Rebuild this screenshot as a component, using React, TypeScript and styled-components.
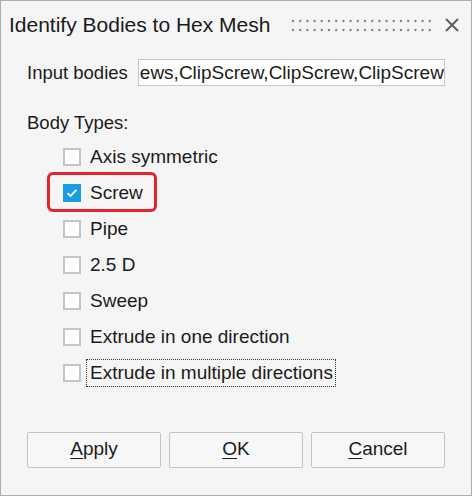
import styled, { createGlobalStyle } from "styled-components";

const GlobalStyle = createGlobalStyle`
  html, body {
    margin: 0;
    padding: 0;
    background: #f5f5f5;
  }
  body {
    font-family: "Liberation Sans", Arial, sans-serif;
  }
`;

const BODY_TYPES = [
  { label: "Axis symmetric", checked: false },
  { label: "Screw", checked: true, highlight: true },
  { label: "Pipe", checked: false },
  { label: "2.5 D", checked: false },
  { label: "Sweep", checked: false },
  { label: "Extrude in one direction", checked: false },
  { label: "Extrude in multiple directions", checked: false, focused: true },
];

function Grip() {
  const dots = [];
  for (let i = 0; i < 20; i++) {
    const cx = 2 + i * 7.2;
    dots.push(<circle key={`a${i}`} cx={cx} cy={2} r={1.2} />);
    dots.push(<circle key={`b${i}`} cx={cx} cy={11} r={1.2} />);
  }
  return (
    <GripSvg width="140" height="13" viewBox="0 0 140 13" fill="#858585">
      {dots}
    </GripSvg>
  );
}

function CloseIcon() {
  return (
    <CloseSvg width="14" height="14" viewBox="0 0 14 14">
      <path d="M1 1 L13 13 M13 1 L1 13" stroke="#5a5a5a" strokeWidth="1.8" />
    </CloseSvg>
  );
}

export default function App() {
  return (
    <>
      <GlobalStyle />
      <Window>
        <TitleBar>
          <Title>Identify Bodies to Hex Mesh</Title>
          <Grip />
          <CloseIcon />
        </TitleBar>

        <InputRow>
          <FieldLabel>Input bodies</FieldLabel>
          <InputBox>ews,ClipScrew,ClipScrew,ClipScrew</InputBox>
        </InputRow>

        <SectionLabel>Body Types:</SectionLabel>

        <List>
          {BODY_TYPES.map((t) => (
            <Row key={t.label} $highlight={!!t.highlight}>
              <Box $checked={t.checked}>
                {t.checked && (
                  <svg width="12" height="10" viewBox="0 0 12 10">
                    <path
                      d="M1.5 5.2 L4.5 8 L10.5 1.8"
                      fill="none"
                      stroke="#fff"
                      strokeWidth="1.8"
                    />
                  </svg>
                )}
              </Box>
              <ItemLabel $focused={!!t.focused}>{t.label}</ItemLabel>
            </Row>
          ))}
        </List>

        <Footer>
          <Button>
            <u>A</u>pply
          </Button>
          <Button>
            <u>O</u>K
          </Button>
          <Button>
            <u>C</u>ancel
          </Button>
        </Footer>
      </Window>
    </>
  );
}

const Window = styled.div`
  width: 472px;
  height: 496px;
  box-sizing: border-box;
  border: 1px solid #acacac;
  background: #f5f5f5;
  color: #1b1b1b;
  display: flex;
  flex-direction: column;
  overflow: hidden;
`;

const TitleBar = styled.div`
  height: 48px;
  display: flex;
  align-items: center;
  padding-left: 8px;
  padding-right: 12px;
`;

const Title = styled.div`
  font-size: 21px;
  color: #1a1a1a;
  white-space: nowrap;
`;

const GripSvg = styled.svg`
  margin-left: auto;
  margin-top: 1px;
  display: block;
`;

const CloseSvg = styled.svg`
  margin-left: 14px;
  display: block;
`;

const InputRow = styled.div`
  margin-top: 10px;
  display: flex;
  align-items: center;
  padding: 0 26px;
  gap: 10px;
`;

const FieldLabel = styled.span`
  font-size: 18.5px;
  white-space: nowrap;
`;

const InputBox = styled.div`
  flex: 1;
  height: 27px;
  box-sizing: border-box;
  border: 1px solid #c6c6c6;
  background: #fff;
  font-size: 19px;
  line-height: 25px;
  padding-left: 1px;
  white-space: nowrap;
  overflow: hidden;
`;

const SectionLabel = styled.div`
  margin-top: 25px;
  padding-left: 26px;
  font-size: 18.5px;
  line-height: 24px;
`;

const List = styled.div`
  margin-top: 4px;
  padding-left: 62px;
  display: flex;
  flex-direction: column;
`;

const Row = styled.div<{ $highlight: boolean }>`
  position: relative;
  height: 36px;
  display: flex;
  align-items: center;
  gap: 5px;

  ${(p) =>
    p.$highlight &&
    `
    &::before {
      content: "";
      position: absolute;
      left: -16px;
      top: -3px;
      width: 110px;
      height: 40px;
      box-sizing: border-box;
      border: 3px solid #e8232b;
      border-radius: 6px;
    }
  `}
`;

const Box = styled.span<{ $checked: boolean }>`
  width: 18px;
  height: 18px;
  box-sizing: border-box;
  display: flex;
  align-items: center;
  justify-content: center;
  border: ${(p) => (p.$checked ? "none" : "2px solid #c2c5c9")};
  background: ${(p) => (p.$checked ? "#1b9de2" : "#fff")};
`;

const ItemLabel = styled.span<{ $focused: boolean }>`
  font-size: 19px;
  line-height: 24px;
  padding: 1px 2px 1px 3px;
  border: 1px dotted ${(p) => (p.$focused ? "#333" : "transparent")};
  white-space: nowrap;
`;

const Footer = styled.div`
  margin-top: auto;
  padding: 0 26px 27px;
  display: flex;
  gap: 8px;
`;

const Button = styled.div`
  width: 134px;
  height: 36px;
  box-sizing: border-box;
  border: 1px solid #c4c4c4;
  border-radius: 2px;
  background: #f7f7f7;
  font-size: 19px;
  display: flex;
  align-items: center;
  justify-content: center;
  padding-bottom: 2px;

  & u {
    text-decoration-thickness: 1px;
    text-underline-offset: 3px;
  }
`;
